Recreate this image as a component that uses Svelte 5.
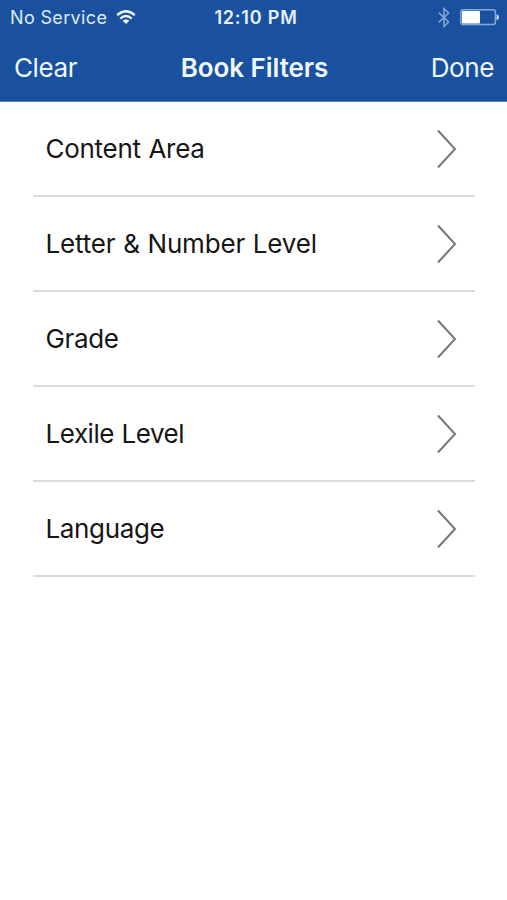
<script>
  const filters = [
    { label: 'Content Area', spacing: -0.28 },
    { label: 'Letter & Number Level', spacing: -0.17 },
    { label: 'Grade', spacing: -0.38 },
    { label: 'Lexile Level', spacing: -0.45 },
    { label: 'Language', spacing: -0.35 }
  ];
</script>

<div class="screen">
  <header>
    <div class="status">
      <div class="carrier">
        <span class="service">No Service</span>
        <svg class="wifi" width="20" height="15" viewBox="0 0 20 15" fill="none" stroke="#f0f8ff" stroke-width="2.3">
          <path d="M1.2 5.1Q10-2.6 18.8 5.1" />
          <path d="M4.3 8.6Q10 3.5 15.7 8.6" />
          <path d="M10 14L6.7 10.8Q10 8.2 13.3 10.8Z" fill="#f0f8ff" stroke="none" />
        </svg>
      </div>
      <span class="time">12:10 PM</span>
      <div class="indicators">
        <svg width="12" height="21" viewBox="0 0 12 21" fill="none" stroke="#80a8d8" stroke-width="1.5">
          <path d="M.8 5.6L10.6 15L6 19.4V1.6L10.6 6L.8 15.4" />
        </svg>
        <svg width="39" height="17" viewBox="0 0 39 17">
          <rect x=".8" y=".8" width="34.6" height="14.8" rx="2.6" fill="none" stroke="#83aadb" stroke-width="1.5" />
          <rect x="2" y="2" width="18" height="12.4" rx="1" fill="#fff" />
          <path d="M36.6 5.2Q38.8 5.8 38.8 8.2T36.6 11.2Z" fill="#d9eafc" />
        </svg>
      </div>
    </div>
    <nav>
      <span class="clear">Clear</span>
      <span class="title">Book Filters</span>
      <span class="done">Done</span>
    </nav>
  </header>
  <main>
    {#each filters as filter}
      <div class="row">
        <span style="letter-spacing: {filter.spacing}px">{filter.label}</span>
        <svg width="22" height="40" viewBox="0 0 22 40" fill="none" stroke="#777" stroke-width="2">
          <path d="M2 2.5L19 21L2 39.5" />
        </svg>
      </div>
    {/each}
  </main>
</div>

<style>
  :global(body) { margin: 0; background: #fff; }
  .screen {
    width: 507px;
    height: 900px;
    overflow: hidden;
    background: #fff;
    font-family: Inter, "Liberation Sans", sans-serif;
    white-space: nowrap;
  }
  header {
    box-sizing: border-box;
    height: 102px;
    background: #1a519e;
    border-bottom: 1px solid #547dae;
    color: #f0f8ff;
  }
  .status, nav {
    display: grid;
    grid-template-columns: 1fr auto 1fr;
    align-items: center;
  }
  .status { height: 34px; padding: 0 8px 0 10px; font-size: 18px; }
  .carrier { display: flex; align-items: center; gap: 9px; }
  .service { color: #dceafb; letter-spacing: .35px; }
  .time { padding-left: 3px; font-weight: 600; font-size: 18px; letter-spacing: .8px; color: #e6f2ff; }
  .indicators { display: flex; justify-content: flex-end; align-items: center; gap: 10px; }
  nav { height: 67px; padding: 0 13px 0 14px; font-size: 26px; }
  .clear { letter-spacing: -.4px; }
  .title { padding-left: 1px; font-weight: 600; letter-spacing: -.05px; }
  .done { text-align: right; letter-spacing: -.4px; }
  main { padding: 0 32px 0 33px; }
  .row {
    box-sizing: border-box;
    height: 94.95px;
    padding: 0 17px 0 12.5px;
    display: flex;
    align-items: center;
    justify-content: space-between;
    border-bottom: 2px solid #dcdcdc;
    font-size: 26px;
    word-spacing: .6px;
    color: #161616;
  }
</style>
